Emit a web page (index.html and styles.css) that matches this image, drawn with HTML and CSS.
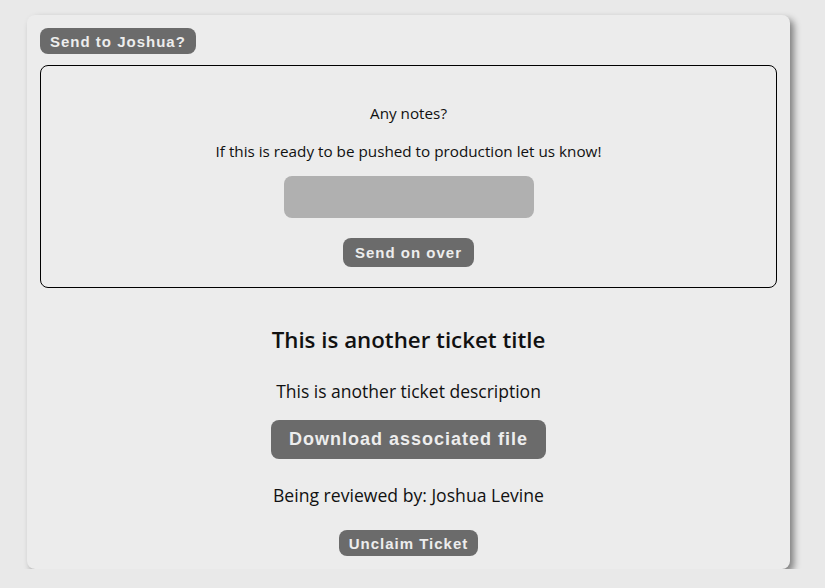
FILE: index.html
```html
<!DOCTYPE html>
<html>
<head>
<meta charset="utf-8">
<link rel="stylesheet" href="styles.css">
</head>
<body>
<div class="card">
  <div class="top-row">
    <button class="btn btn-sm">Send to Joshua?</button>
  </div>
  <div class="notes">
    <p class="notes-q">Any notes?</p>
    <p class="notes-hint">If this is ready to be pushed to production let us know!</p>
    <div class="input"></div>
    <button class="btn btn-send">Send on over</button>
  </div>
  <h2 class="title">This is another ticket title</h2>
  <p class="desc">This is another ticket description</p>
  <button class="btn btn-lg">Download associated file</button>
  <p class="reviewer">Being reviewed by: Joshua Levine</p>
  <button class="btn btn-unclaim">Unclaim Ticket</button>
</div>
</body>
</html>
```

FILE: styles.css
```css
html, body {
  margin: 0;
  padding: 0;
  background: #e9e9e9;
}
body {
  font-family: "Open Sans", "Noto Sans", sans-serif;
  color: #111;
}
.card {
  width: 737px;
  margin: 15px 0 0 27px;
  padding: 13px 13px 13px 13px;
  background: #ececec;
  border-radius: 8px;
  box-shadow: 4px 4px 7px rgba(0,0,0,0.45);
  display: flex;
  flex-direction: column;
  align-items: center;
}
.top-row {
  align-self: stretch;
  display: flex;
}
.btn {
  border: none;
  background: #6b6b6b;
  color: #ededed;
  font-family: "Liberation Sans", Arial, sans-serif;
  font-weight: bold;
  letter-spacing: 1px;
  border-radius: 8px;
  margin: 0;
}
.btn-sm {
  font-size: 15px;
  height: 26px;
  padding: 0 10px;
}
.notes {
  align-self: stretch;
  margin-top: 11px;
  border: 1px solid #000;
  border-radius: 8px;
  padding: 37px 0 20px;
  display: flex;
  flex-direction: column;
  align-items: center;
}
.notes p {
  margin: 0;
  font-size: 15.25px;
  line-height: 20px;
}
.notes-hint {
  margin-top: 18px !important;
}
.input {
  margin-top: 15px;
  width: 250px;
  height: 42px;
  background: #b0b0b0;
  border-radius: 8px;
}
.btn-send {
  margin-top: 20px;
  font-size: 15px;
  height: 29px;
  padding: 0 12px;
}
.title {
  margin: 36px 0 0;
  font-size: 22.3px;
  line-height: 32px;
  font-weight: 600;
}
.desc {
  margin: 23px 0 0;
  font-size: 17.5px;
  line-height: 24px;
  font-weight: 500;
}
.btn-lg {
  margin-top: 17px;
  font-size: 18px;
  height: 39px;
  padding: 0 18px;
}
.reviewer {
  margin: 24px 0 0;
  font-size: 17.6px;
  line-height: 24px;
  font-weight: 500;
}
.btn-unclaim {
  margin-top: 23px;
  font-size: 15px;
  height: 26px;
  padding: 1px 10px 0;
  line-height: 24px;
}
```
